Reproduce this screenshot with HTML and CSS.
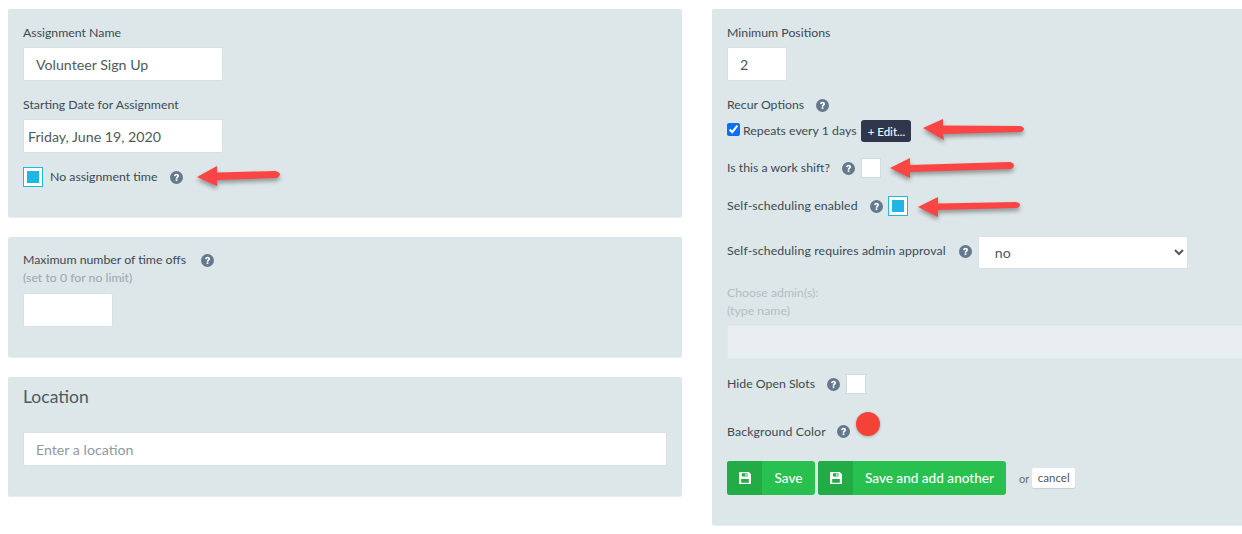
FILE: index.html
```html
<!DOCTYPE html>
<html lang="en">
<head>
<meta charset="utf-8">
<title>Assignment</title>
<link rel="stylesheet" href="styles.css">
</head>
<body>
<svg width="0" height="0" class="defs">
  <defs>
    <symbol id="help" viewBox="0 0 12 12"><circle cx="6" cy="6" r="6" fill="#64798d"/><path d="M3.800 4.700c0-1.400 1.100-2.200 2.300-2.200s2.200.8 2.200 2c0 1.600-1.500 1.500-1.500 2.600H5.200c0-1.900 1.500-1.800 1.500-2.600 0-.4-.3-.6-.7-.6-.5 0-.8.3-.8.9z" fill="#fff"/><rect x="5.200" y="7.700" width="1.600" height="1.600" fill="#fff"/></symbol>
    <symbol id="floppy" viewBox="0 0 14 14"><path fill-rule="evenodd" d="M1.500 1h9.300L13 3.200v9.300c0 .3-.2.500-.5.500h-11c-.3 0-.5-.2-.5-.5v-11c0-.3.2-.5.5-.5zM4 2.300v3.200h5.500V2.300zM3.200 8v3.700h7.600V8zM7.300 2.800h1.200v2.200H7.300z" fill="#fff"/></symbol>
  </defs>
</svg>
<main class="page">
  <div class="col-left">
    <section class="panel panel-name">
      <label class="label">Assignment Name</label>
      <input class="field field-name" type="text" value="Volunteer Sign Up">
      <label class="label label-next">Starting Date for Assignment</label>
      <input class="field field-date" type="text" value="Friday, June 19, 2020">
      <div class="row row-notime">
        <span class="box box-on"><i></i></span>
        <span class="text text-notime">No assignment time</span>
        <svg class="help help-notime"><use href="#help"/></svg>
      </div>
    </section>
    <section class="panel panel-max">
      <div class="row row-max"><span class="text">Maximum number of time offs</span><svg class="help help-max"><use href="#help"/></svg></div>
      <div class="hint">(set to 0 for no limit)</div>
      <input class="field field-max" type="text">
    </section>
    <section class="panel panel-loc">
      <h2 class="title">Location</h2>
      <input class="field field-loc" type="text" placeholder="Enter a location">
    </section>
  </div>
  <section class="panel panel-right">
    <label class="label">Minimum Positions</label>
    <input class="field field-min" type="text" value="2">
    <div class="row row-recur"><span class="text">Recur Options</span><svg class="help help-recur"><use href="#help"/></svg></div>
    <div class="row row-repeat">
      <input class="check" type="checkbox" checked>
      <span class="text text-repeat">Repeats every 1 days</span>
      <button class="edit" type="button">+ Edit...</button>
    </div>
    <div class="row row-shift"><span class="text">Is this a work shift?</span><svg class="help help-shift"><use href="#help"/></svg><span class="box"></span></div>
    <div class="row row-self"><span class="text text-wide">Self-scheduling enabled</span><svg class="help help-self"><use href="#help"/></svg><span class="box box-on"><i></i></span></div>
    <div class="row row-approve">
      <span class="text text-wide text-approve">Self-scheduling requires admin approval</span><svg class="help help-approve"><use href="#help"/></svg>
      <select class="field field-select"><option>no</option></select>
    </div>
    <div class="muted muted-a">Choose admin(s):</div>
    <div class="muted muted-b">(type name)</div>
    <div class="disabled-field"></div>
    <div class="row row-hide"><span class="text text-hide">Hide Open Slots</span><svg class="help help-hide"><use href="#help"/></svg><span class="box"></span></div>
    <div class="row row-color"><span class="text text-wide">Background Color</span><svg class="help help-color"><use href="#help"/></svg><span class="swatch"></span></div>
    <div class="row row-actions">
      <button class="save save-one" type="button"><span class="save-icon"><svg class="floppy"><use href="#floppy"/></svg></span><span class="save-text">Save</span></button>
      <button class="save save-two" type="button"><span class="save-icon"><svg class="floppy"><use href="#floppy"/></svg></span><span class="save-text">Save and add another</span></button>
      <span class="or">or</span>
      <a class="cancel">cancel</a>
    </div>
  </section>
</main>
<svg class="arrows" viewBox="0 0 1242 534">
  <path d="M197 177 L217 166 L217 172.500 L275 171 Q280 172 280 174.500 Q279 178 275 178 L217 180 L217 186 Z"/>
  <path d="M923 128 L943 119 L943 125.500 L1020 126 Q1024 127 1024 129 Q1023 132 1020 132 L943 134 L944 140 Z"/>
  <path d="M890 168 L910 158 L910 165 L1010 162 Q1014 163 1014 165.500 Q1013 169 1010 169 L910 172 L910 178 Z"/>
  <path d="M918 207 L938 197 L938 203.500 L1016 202 Q1020 203 1020 205 Q1019 208 1016 208 L938 210 L938 217 Z"/>
</svg>
</body>
</html>
```
FILE: styles.css
```css
* { box-sizing: border-box; }
html, body { margin: 0; height: 534px; overflow: hidden; background: #fff; }
body { font-family: "Lato", "Noto Sans", sans-serif; font-size: 12.3px; color: #3c4a52; position: relative; }
.defs { position: absolute; }
.page { display: flex; gap: 30px; padding: 9px 0 0 8px; width: 1300px; align-items: flex-start; }
.col-left { width: 674px; display: flex; flex-direction: column; gap: 20px; flex: none; }
.panel { background: #dde6e8; border-radius: 2px; padding: 15px; box-shadow: 0 1px 0 #e9eef0; }
.panel-name { height: 208px; padding-top: 16px; }
.panel-max { height: 120px; }
.panel-loc { height: 119px; }
.panel-right { width: 560px; height: 516px; flex: none; padding-top: 16px; }
.label, .text, .hint, .muted { display: block; line-height: 16px; }
.text-wide { letter-spacing: .12px; }
.text-approve { margin-bottom: 3px; }
.text-hide { margin-bottom: 1px; }
.field { display: block; background: #fff; border: 1px solid #d9e1e4; border-radius: 2px; height: 34px; font-family: inherit; font-size: 14.2px; color: #4e5a60; outline: none; }
.field-name { width: 200px; margin-top: 6px; padding: 0 12px; }
.label-next { margin-top: 16px; }
.field-date { width: 200px; margin-top: 6px; padding: 0 4px; }
.row { display: flex; align-items: center; }
.box { width: 20px; height: 20px; background: #fff; border: 1px solid #d3dcdf; display: flex; align-items: center; justify-content: center; flex: none; }
.box-on { border-color: #1fb5e6; }
.box-on i { width: 12px; height: 12px; background: #1fb5e6; display: block; }
.help { width: 13px; height: 13px; flex: none; }
.row-notime { margin-top: 14px; height: 20px; }
.text-notime { margin-left: 7px; }
.help-notime { margin-left: 13px; }
.row-max { height: 16px; }
.help-max { margin-left: 15px; }
.hint { color: #9aa7ad; margin-top: 2px; }
.field-max { width: 90px; margin-top: 7px; }
.title { margin: -6px 0 0; font-size: 17.5px; font-weight: 400; line-height: 22px; color: #4d5a5f; }
.field-loc { width: 644px; margin-top: 24px; padding: 0 12px; }
.field-loc::placeholder { color: #8f9aa0; opacity: 1; }
.field-min { width: 60px; margin-top: 6px; padding: 0 12px; }
.row-recur { margin-top: 16px; height: 16px; }
.help-recur { margin-left: 12px; }
.row-repeat { margin-top: 6px; height: 24px; }
.check { width: 13px; height: 13px; margin: 0 3px 3px 0; accent-color: #0d6efd; flex: none; }
.edit { margin-left: 5px; height: 22px; width: 50px; padding: 0; border: 0; border-radius: 3px; background: #30364b; color: #fff; font: 500 11.5px "Lato", sans-serif; }
.row-shift { margin-top: 15px; height: 20px; }
.help-shift { margin-left: 12px; }
.row-shift .box { margin-left: 6px; }
.row-self { margin-top: 18px; height: 20px; }
.help-self { margin-left: 12px; }
.row-self .box { margin-left: 5px; }
.row-approve { margin-top: 20px; height: 33px; }
.help-approve { margin-left: 13px; margin-bottom: 3px; }
.field-select { width: 210px; margin-left: 6px; padding: 0 12px; height: 33px; }
.muted { color: #b3bec3; }
.muted-a { margin-top: 16px; }
.muted-b { margin-top: 2px; }
.disabled-field { height: 34px; width: 530px; margin-top: 6px; background: #e9eff1; border: 1px solid #e2e9eb; }
.row-hide { margin-top: 15px; height: 20px; }
.help-hide { margin-left: 12px; }
.row-hide .box { margin-left: 6px; }
.row-color { margin-top: 19px; height: 40px; align-items: flex-end; padding-bottom: 13px; }
.help-color { margin-left: 11px; margin-bottom: 2px; }
.swatch { width: 24px; height: 24px; border-radius: 50%; background: #f44336; margin: 0 0 4px 6px; box-shadow: 0 1px 3px rgba(0,0,0,.25); }
.row-actions { margin-top: 8px; height: 34px; }
.save { display: flex; align-items: stretch; padding: 0; height: 34px; border: 0; border-radius: 3px; background: #28c04f; color: #fff; font: 500 13.6px "Lato", sans-serif; overflow: hidden; }
.save-one { width: 88px; }
.save-two { width: 188px; margin-left: 3px; }
.save-icon { width: 35px; background: #23ab46; display: flex; align-items: center; justify-content: center; flex: none; }
.floppy { width: 14px; height: 14px; }
.save-text { flex: 1; display: flex; align-items: center; justify-content: center; }
.or { margin-left: 13px; font-size: 11px; color: #5f6d75; }
.cancel { margin-left: 3px; width: 43px; height: 20px; line-height: 20px; background: #fff; border-radius: 2px; text-align: center; font-size: 11.5px; box-shadow: 0 1px 1px rgba(0,0,0,.1); color: #4e5a60; }
.arrows { position: absolute; left: 0; top: 0; width: 1242px; height: 534px; pointer-events: none; filter: drop-shadow(0 3px 2px rgba(0,0,0,.35)); }
.arrows path { fill: #fb4444; }
```
